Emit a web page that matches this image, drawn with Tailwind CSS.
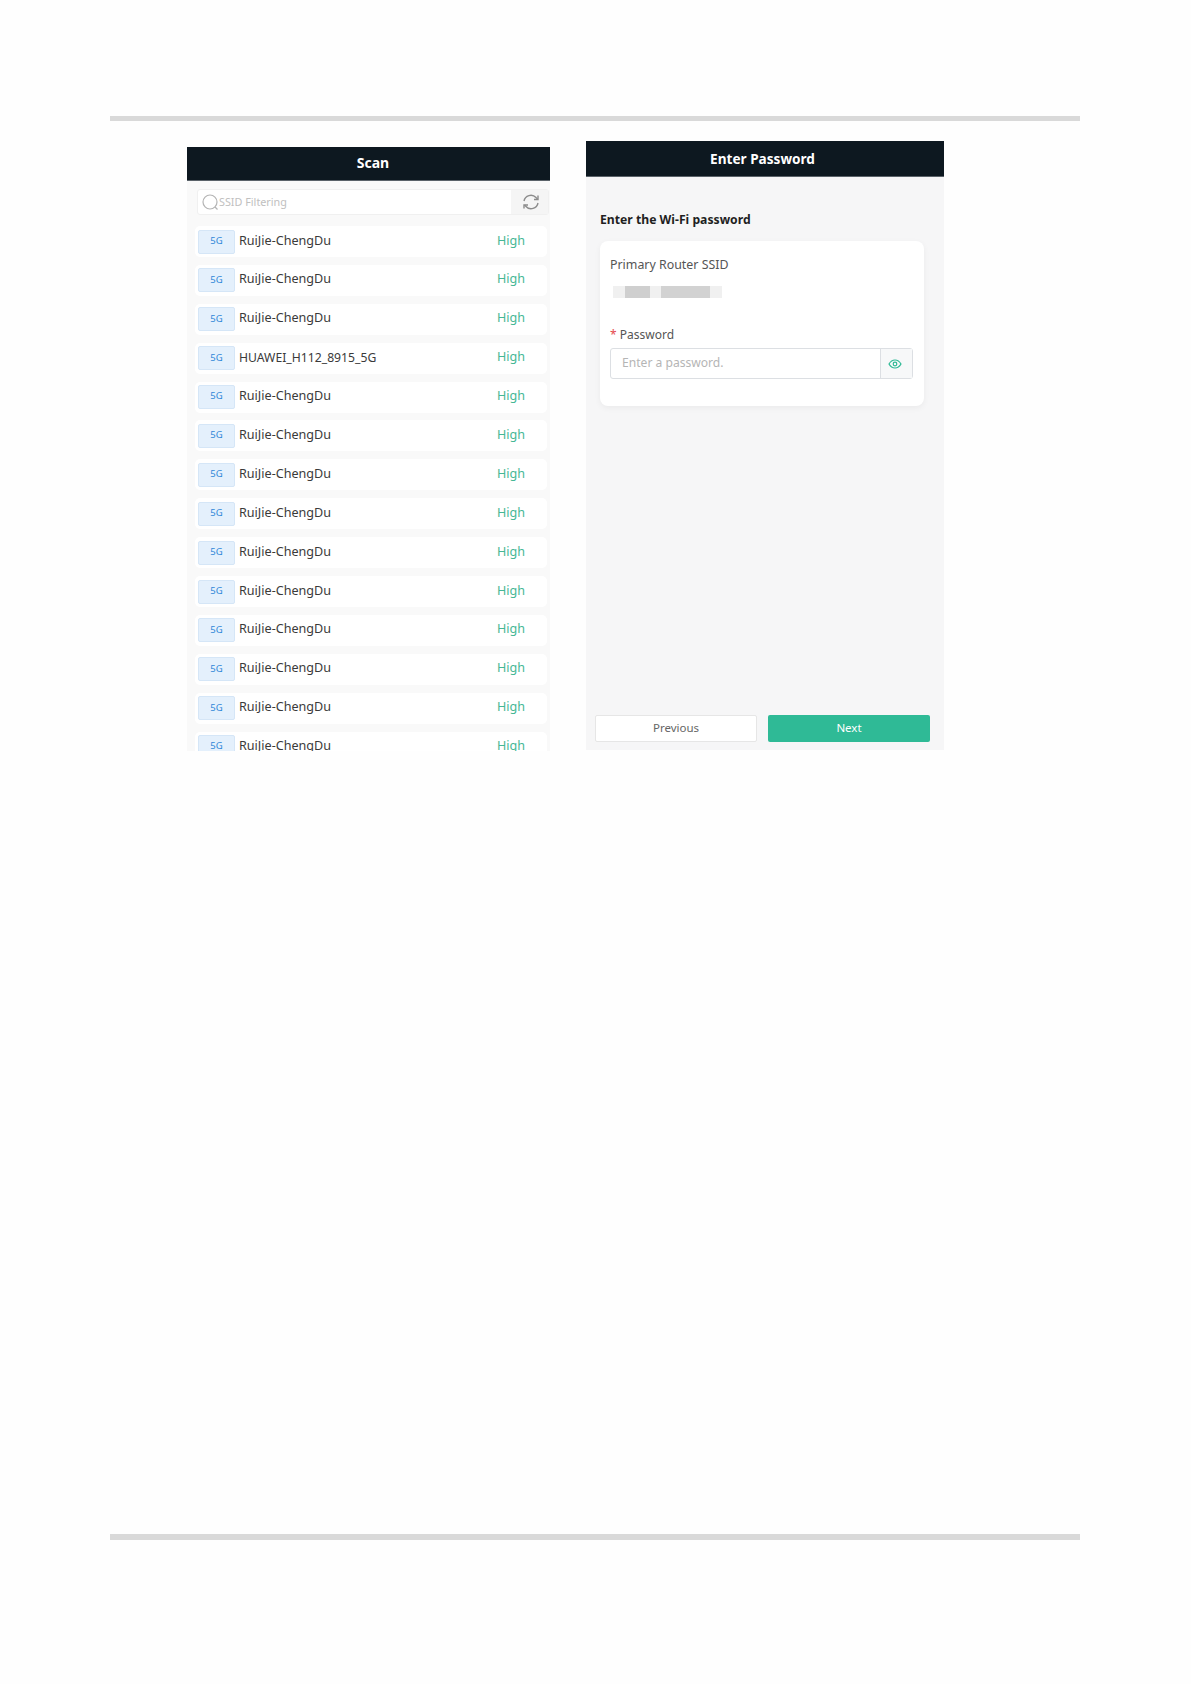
<!DOCTYPE html>
<html lang="en">
<head>
  <meta charset="UTF-8" />
  <title>Scan / Enter Password</title>
  <script src="https://cdn.jsdelivr.net/npm/@tailwindcss/browser@4"></script>
</head>
<body class="bg-[#fefefe] font-['Noto_Sans','Open_Sans',sans-serif]">
  <div class="w-[1191px] h-[1684px] pt-[116px] pl-[110px]">
    <div class="w-[970px] h-[5px] bg-[#d9d9d9]"></div>

    <div class="flex items-start h-[1413px]">
      <!-- Scan -->
      <section class="w-[363px] h-[604px] mt-[26px] ml-[77px] bg-[#f9f9f9] overflow-hidden">
        <div class="h-[34px] bg-[#0d1820] border-b border-[#5a6269] flex items-center justify-center pl-[9px] pb-[2px] text-white text-[14px] font-bold">Scan</div>
        <div class="flex items-center h-[26px] ml-[10px] mr-px mt-[8px] bg-white rounded-[3px] border border-[#f0f0f0]">
          <svg class="ml-[4px] shrink-0" width="17" height="17" viewBox="0 0 17 17" fill="none" stroke="#b4b4b4" stroke-width="1.2"><circle cx="8" cy="8" r="7"/><path d="M13 13l2.5 2.5"/></svg>
          <span class="flex-1 text-[10.8px] text-[#c0c0c0]">SSID Filtering</span>
          <div class="w-[37px] h-full bg-[#f5f5f5] flex items-center justify-center pl-[2px]">
            <svg width="18" height="18" viewBox="0 0 18 18" fill="none" stroke="#8c8c8c" stroke-width="1.4"><path d="M2 8a7 7 0 0 1 12-3.5L15.5 6"/><path d="M16 2.5V6.500h-4"/><path d="M16 10a7 7 0 0 1-12 3.500L2.500 12"/><path d="M2 15.500V12h4"/></svg>
          </div>
        </div>
        <div id="rows" class="mt-[11px] ml-[8px] mr-[3px] flex flex-col gap-[7.9px]">
          <div class="h-[31px] shrink-0 bg-white rounded-[5px] flex items-center pl-[3px] text-[12.6px] text-[#3a3a3a]"><span class="w-[37px] h-[24px] mr-[4px] bg-[#e4f0fc] border border-[#d5e6f7] rounded-[2px] flex items-center justify-center pb-px text-[9.5px] text-[#2f86d8]">5G</span><span class="flex-1 pb-px">RuiJie-ChengDu</span><span class="w-[50px] pb-px text-[#45b795]">High</span></div>
          <div class="h-[31px] shrink-0 bg-white rounded-[5px] flex items-center pl-[3px] text-[12.6px] text-[#3a3a3a]"><span class="w-[37px] h-[24px] mr-[4px] bg-[#e4f0fc] border border-[#d5e6f7] rounded-[2px] flex items-center justify-center pb-px text-[9.5px] text-[#2f86d8]">5G</span><span class="flex-1 pb-px">RuiJie-ChengDu</span><span class="w-[50px] pb-px text-[#45b795]">High</span></div>
          <div class="h-[31px] shrink-0 bg-white rounded-[5px] flex items-center pl-[3px] text-[12.6px] text-[#3a3a3a]"><span class="w-[37px] h-[24px] mr-[4px] bg-[#e4f0fc] border border-[#d5e6f7] rounded-[2px] flex items-center justify-center pb-px text-[9.5px] text-[#2f86d8]">5G</span><span class="flex-1 pb-px">RuiJie-ChengDu</span><span class="w-[50px] pb-px text-[#45b795]">High</span></div>
          <div class="h-[31px] shrink-0 bg-white rounded-[5px] flex items-center pl-[3px] text-[12.6px] text-[#3a3a3a]"><span class="w-[37px] h-[24px] mr-[4px] bg-[#e4f0fc] border border-[#d5e6f7] rounded-[2px] flex items-center justify-center pb-px text-[9.5px] text-[#2f86d8]">5G</span><span class="flex-1 pb-px text-[12.2px]">HUAWEI_H112_8915_5G</span><span class="w-[50px] pb-px text-[#45b795]">High</span></div>
          <div class="h-[31px] shrink-0 bg-white rounded-[5px] flex items-center pl-[3px] text-[12.6px] text-[#3a3a3a]"><span class="w-[37px] h-[24px] mr-[4px] bg-[#e4f0fc] border border-[#d5e6f7] rounded-[2px] flex items-center justify-center pb-px text-[9.5px] text-[#2f86d8]">5G</span><span class="flex-1 pb-px">RuiJie-ChengDu</span><span class="w-[50px] pb-px text-[#45b795]">High</span></div>
          <div class="h-[31px] shrink-0 bg-white rounded-[5px] flex items-center pl-[3px] text-[12.6px] text-[#3a3a3a]"><span class="w-[37px] h-[24px] mr-[4px] bg-[#e4f0fc] border border-[#d5e6f7] rounded-[2px] flex items-center justify-center pb-px text-[9.5px] text-[#2f86d8]">5G</span><span class="flex-1 pb-px">RuiJie-ChengDu</span><span class="w-[50px] pb-px text-[#45b795]">High</span></div>
          <div class="h-[31px] shrink-0 bg-white rounded-[5px] flex items-center pl-[3px] text-[12.6px] text-[#3a3a3a]"><span class="w-[37px] h-[24px] mr-[4px] bg-[#e4f0fc] border border-[#d5e6f7] rounded-[2px] flex items-center justify-center pb-px text-[9.5px] text-[#2f86d8]">5G</span><span class="flex-1 pb-px">RuiJie-ChengDu</span><span class="w-[50px] pb-px text-[#45b795]">High</span></div>
          <div class="h-[31px] shrink-0 bg-white rounded-[5px] flex items-center pl-[3px] text-[12.6px] text-[#3a3a3a]"><span class="w-[37px] h-[24px] mr-[4px] bg-[#e4f0fc] border border-[#d5e6f7] rounded-[2px] flex items-center justify-center pb-px text-[9.5px] text-[#2f86d8]">5G</span><span class="flex-1 pb-px">RuiJie-ChengDu</span><span class="w-[50px] pb-px text-[#45b795]">High</span></div>
          <div class="h-[31px] shrink-0 bg-white rounded-[5px] flex items-center pl-[3px] text-[12.6px] text-[#3a3a3a]"><span class="w-[37px] h-[24px] mr-[4px] bg-[#e4f0fc] border border-[#d5e6f7] rounded-[2px] flex items-center justify-center pb-px text-[9.5px] text-[#2f86d8]">5G</span><span class="flex-1 pb-px">RuiJie-ChengDu</span><span class="w-[50px] pb-px text-[#45b795]">High</span></div>
          <div class="h-[31px] shrink-0 bg-white rounded-[5px] flex items-center pl-[3px] text-[12.6px] text-[#3a3a3a]"><span class="w-[37px] h-[24px] mr-[4px] bg-[#e4f0fc] border border-[#d5e6f7] rounded-[2px] flex items-center justify-center pb-px text-[9.5px] text-[#2f86d8]">5G</span><span class="flex-1 pb-px">RuiJie-ChengDu</span><span class="w-[50px] pb-px text-[#45b795]">High</span></div>
          <div class="h-[31px] shrink-0 bg-white rounded-[5px] flex items-center pl-[3px] text-[12.6px] text-[#3a3a3a]"><span class="w-[37px] h-[24px] mr-[4px] bg-[#e4f0fc] border border-[#d5e6f7] rounded-[2px] flex items-center justify-center pb-px text-[9.5px] text-[#2f86d8]">5G</span><span class="flex-1 pb-px">RuiJie-ChengDu</span><span class="w-[50px] pb-px text-[#45b795]">High</span></div>
          <div class="h-[31px] shrink-0 bg-white rounded-[5px] flex items-center pl-[3px] text-[12.6px] text-[#3a3a3a]"><span class="w-[37px] h-[24px] mr-[4px] bg-[#e4f0fc] border border-[#d5e6f7] rounded-[2px] flex items-center justify-center pb-px text-[9.5px] text-[#2f86d8]">5G</span><span class="flex-1 pb-px">RuiJie-ChengDu</span><span class="w-[50px] pb-px text-[#45b795]">High</span></div>
          <div class="h-[31px] shrink-0 bg-white rounded-[5px] flex items-center pl-[3px] text-[12.6px] text-[#3a3a3a]"><span class="w-[37px] h-[24px] mr-[4px] bg-[#e4f0fc] border border-[#d5e6f7] rounded-[2px] flex items-center justify-center pb-px text-[9.5px] text-[#2f86d8]">5G</span><span class="flex-1 pb-px">RuiJie-ChengDu</span><span class="w-[50px] pb-px text-[#45b795]">High</span></div>
          <div class="h-[31px] shrink-0 bg-white rounded-[5px] flex items-center pl-[3px] text-[12.6px] text-[#3a3a3a]"><span class="w-[37px] h-[24px] mr-[4px] bg-[#e4f0fc] border border-[#d5e6f7] rounded-[2px] flex items-center justify-center pb-px text-[9.5px] text-[#2f86d8]">5G</span><span class="flex-1 pb-px">RuiJie-ChengDu</span><span class="w-[50px] pb-px text-[#45b795]">High</span></div>
        </div>
      </section>

      <!-- Enter Password -->
      <section class="w-[358px] h-[609px] mt-[20px] ml-[36px] bg-[#f6f6f7] flex flex-col">
        <div class="h-[36px] shrink-0 bg-[#0d1820] border-b border-[#5a6269] flex items-center justify-center pt-[2px] pr-[5px] text-white text-[13.6px] font-bold">Enter Password</div>
        <h2 class="mt-[34px] ml-[14px] text-[12.2px] leading-[18px] font-bold text-[#1f1f1f]">Enter the Wi-Fi password</h2>
        <div class="mt-[12px] ml-[14px] w-[324px] h-[165px] bg-white rounded-[8px] shadow-[0_2px_6px_rgba(0,0,0,0.05)] pt-[15px] px-[10px]">
          <div class="text-[12.4px] leading-[18px] text-[#555]">Primary Router SSID</div>
          <div class="mt-[12px] ml-[3px] w-[109px] h-[12px] flex bg-[#f0f0f0] blur-[0.5px]">
            <div class="ml-[12px] w-[25px] bg-[#cfcfcf]"></div>
            <div class="ml-[11px] w-[49px] bg-[#d2d2d2]"></div>
          </div>
          <div class="mt-[28px] text-[12px] leading-[18px] text-[#555]"><span class="text-[#e5484d]">*</span> Password</div>
          <div class="mt-[4px] w-[303px] h-[31px] flex border border-[#dcdfe3] rounded-[3px]">
            <div class="flex-1 pl-[11px] flex items-center text-[12.1px] text-[#b5b5b5]">Enter a password.</div>
            <div class="w-[32px] bg-[#f7f8f9] border-l border-[#dcdfe3] flex items-center justify-center pr-[3px]">
              <svg width="14" height="10" viewBox="0 0 14 10" fill="none" stroke="#2db995" stroke-width="1.2"><path d="M1 5c1.500-2.600 3.500-4 6-4s4.500 1.400 6 4c-1.500 2.600-3.500 4-6 4s-4.500-1.400-6-4z"/><circle cx="7" cy="5" r="1.800"/></svg>
            </div>
          </div>
        </div>
        <div class="mt-auto mb-[8px] ml-[9px] flex items-center gap-[11px]">
          <button class="w-[162px] h-[27px] bg-white border border-[#e6e6e6] rounded-[2px] text-[11.5px] text-[#666] pb-px">Previous</button>
          <button class="w-[162px] h-[27px] bg-[#2fba96] rounded-[2px] text-[11.5px] text-white pb-px">Next</button>
        </div>
      </section>
    </div>

    <div class="w-[970px] h-[6px] bg-[#d9d9d9]"></div>
  </div>
</body>
</html>
